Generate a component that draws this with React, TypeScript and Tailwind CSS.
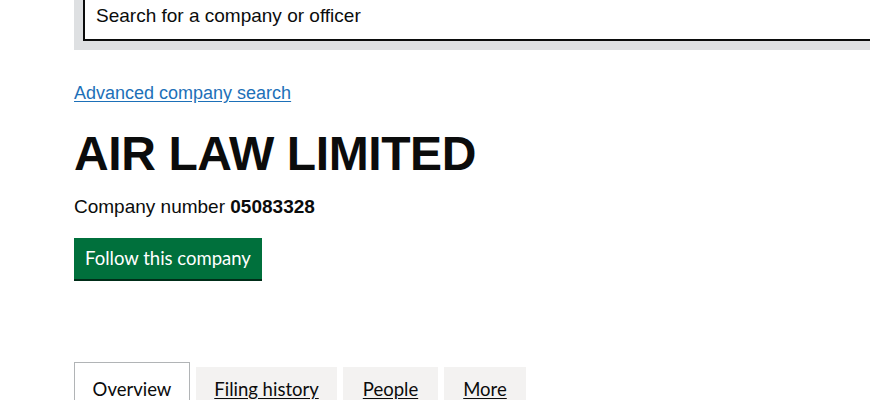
import React from 'react';

const arial = { fontFamily: '"Liberation Sans", Arial, sans-serif' };
const transport = { fontFamily: 'Lato, "Noto Sans", sans-serif' };

const App = () => {
  return (
    <div className="w-[870px] h-[400px] overflow-hidden bg-white text-[#0b0c0c]" style={arial}>
      {/* Search bar */}
      <div className="ml-[74px] -mt-[17px] w-[900px] bg-[#dee0e2] p-[9px]">
        <div className="h-[49px] border-2 border-[#0b0c0c] bg-white pl-[11px] flex items-center">
          <span className="text-[19px]">Search for a company or officer</span>
        </div>
      </div>

      <div className="ml-[74px]">
        {/* Advanced link */}
        <a href="#" className="mt-[33px] block w-fit text-[18px] leading-[20px] text-[#1d70b8] underline underline-offset-2">
          Advanced company search
        </a>

        {/* Heading */}
        <h1 className="mt-[23px] text-[48px] leading-[56px] font-bold tracking-[-0.4px]">AIR LAW LIMITED</h1>

        {/* Company number */}
        <p className="mt-[13px] text-[19px] leading-[24px]">
          Company number <strong className="font-bold">05083328</strong>
        </p>

        {/* Follow button */}
        <div className="mt-[19px]">
          <button className="h-[41px] w-[188px] bg-[#00703c] text-white text-[18.5px] shadow-[0_2px_0_#002d18] flex items-center justify-center" style={transport}>
            Follow this company
          </button>
        </div>

        {/* Tabs */}
        <div className="mt-[83px] flex items-start gap-[6px] text-[18.5px] leading-[22px]" style={transport}>
          <div className="h-[50px] w-[116px] border border-b-0 border-[#b1b4b6] bg-white flex justify-center pt-[15px]">
            Overview
          </div>
          <a href="#" className="mt-[5px] h-[45px] w-[141px] bg-[#f3f2f1] flex justify-center pt-[11px] underline underline-offset-2 text-[#0b0c0c]">
            Filing history
          </a>
          <a href="#" className="mt-[5px] h-[45px] w-[95px] bg-[#f3f2f1] flex justify-center pt-[11px] underline underline-offset-2 text-[#0b0c0c]">
            People
          </a>
          <a href="#" className="mt-[5px] h-[45px] w-[82px] bg-[#f3f2f1] flex justify-center pt-[11px] underline underline-offset-2 text-[#0b0c0c]">
            More
          </a>
        </div>
      </div>
    </div>
  );
};

export default App;
